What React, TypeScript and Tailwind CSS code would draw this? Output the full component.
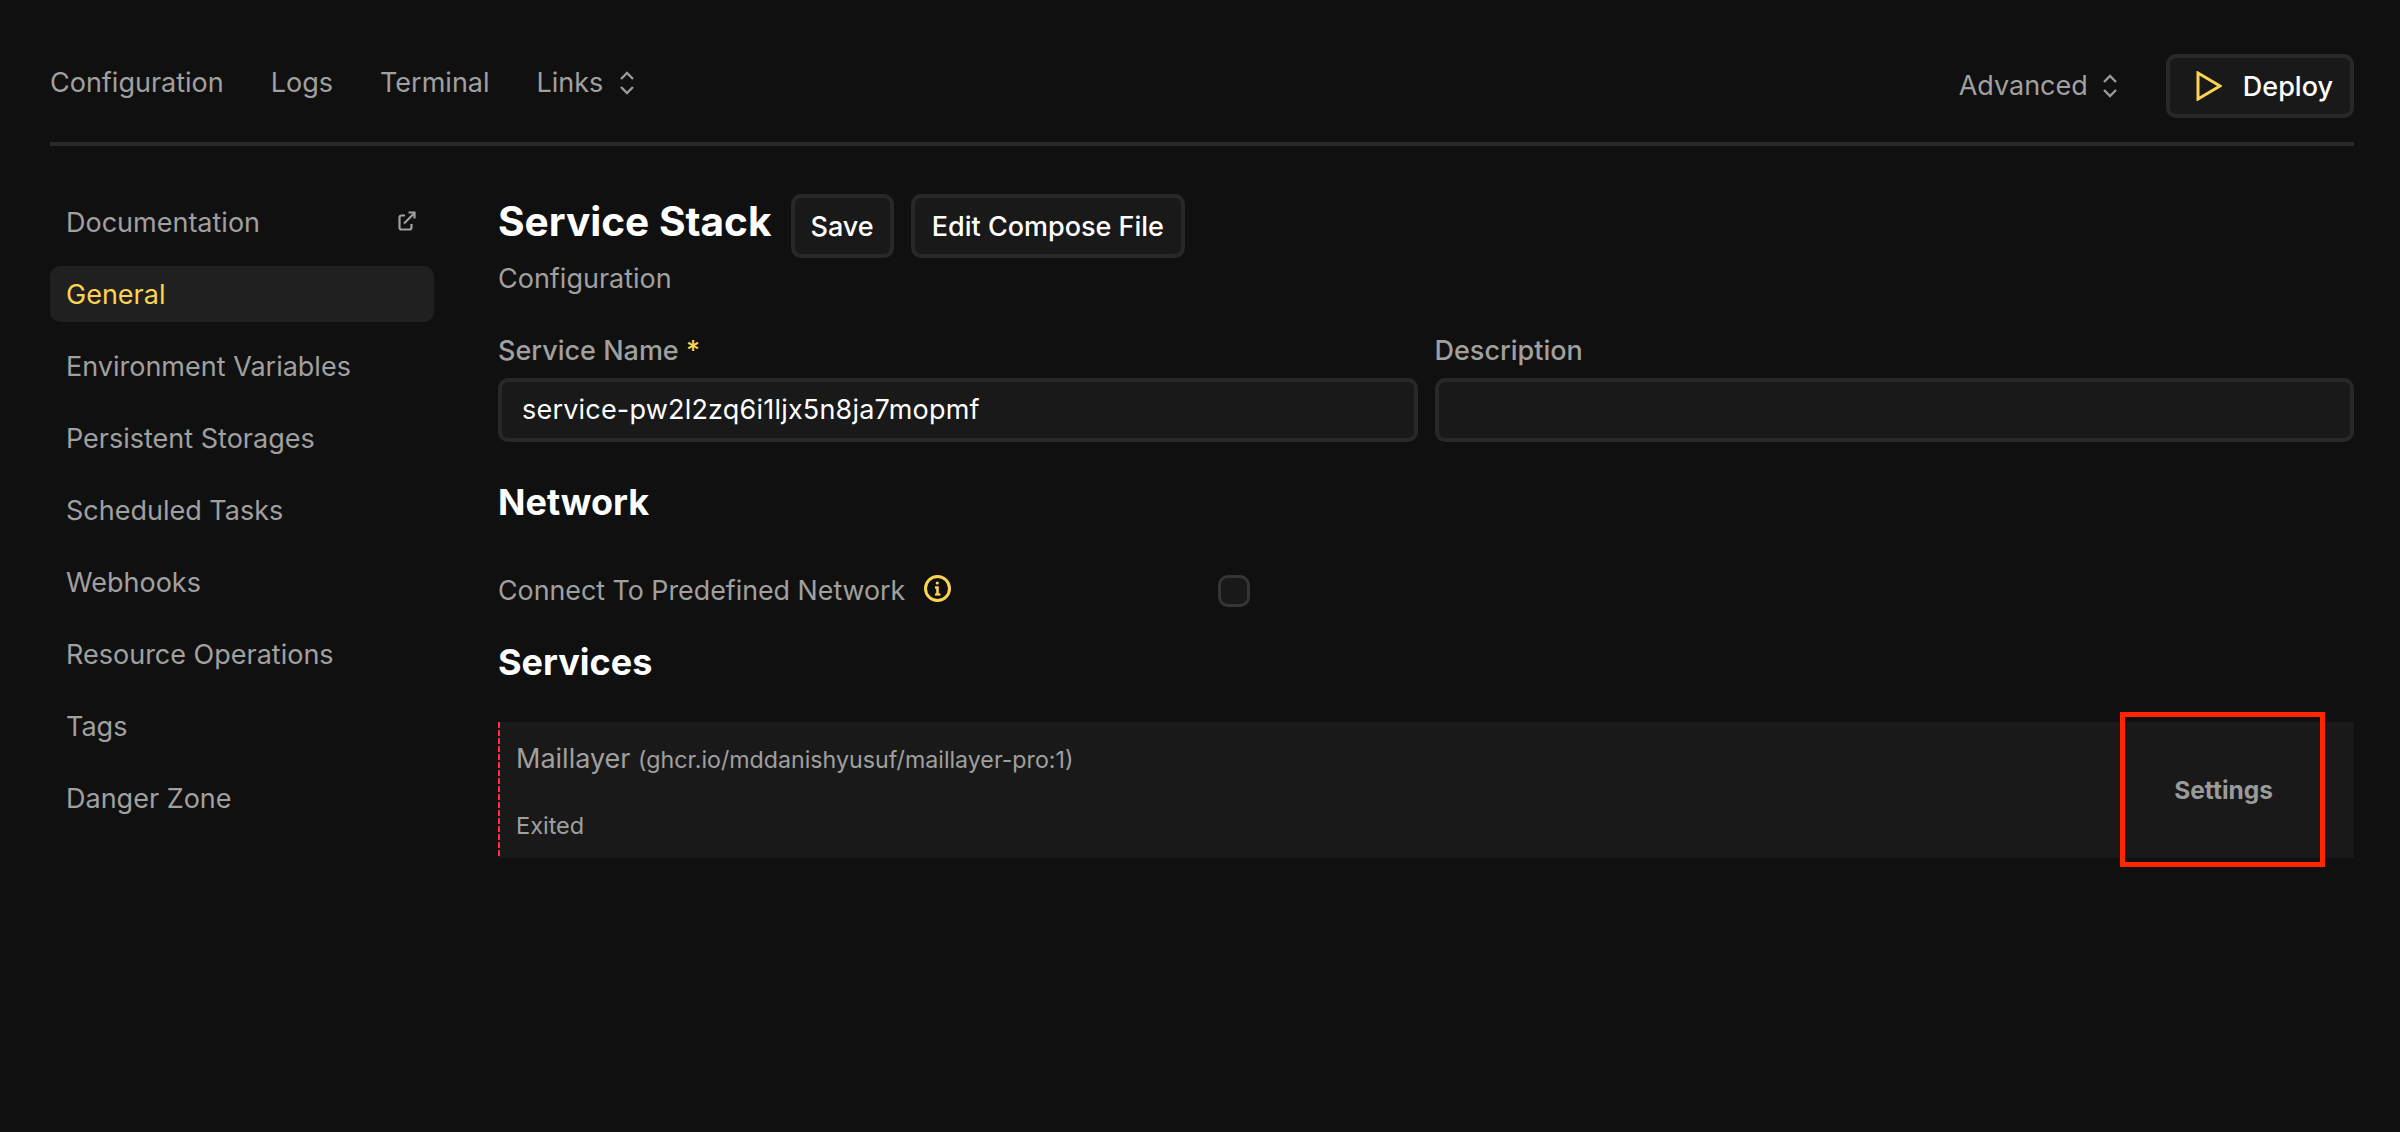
const menu = [
  "Documentation",
  "General",
  "Environment Variables",
  "Persistent Storages",
  "Scheduled Tasks",
  "Webhooks",
  "Resource Operations",
  "Tags",
  "Danger Zone",
]

function Updown() {
  return (
    <svg width="16" height="24" viewBox="0 0 16 24" fill="none" stroke="#9a9a9a" strokeWidth="2.4">
      <path d="M2 8 L8 2 L14 8" />
      <path d="M2 16 L8 22 L14 16" />
    </svg>
  )
}

function Btn({ children, className }: { children: React.ReactNode; className?: string }) {
  return (
    <button
      className={
        "flex h-[64px] items-center rounded-[10px] border-4 border-[#282828] bg-[#191919] pt-[2px] text-[27px] font-medium text-white " +
        (className ?? "px-[17px]")
      }
    >
      {children}
    </button>
  )
}

export default function App() {
  return (
    <div className="h-[1132px] overflow-hidden bg-[#101010] pr-[46px] pl-[50px] font-['Inter',sans-serif] text-[27px] text-[#a0a0a0]">
      {/* top nav */}
      <div className="box-content flex h-[88px] items-start justify-between border-b-4 border-[#282828] pt-[54px]">
        <div className="flex h-[56px] items-start gap-[47px] pt-[11px]">
          <span className="leading-[36px]">Configuration</span>
          <span className="leading-[36px]">Logs</span>
          <span className="leading-[36px]">Terminal</span>
          <span className="flex items-center gap-[16px] leading-[36px]">
            Links <Updown />
          </span>
        </div>
        <div className="flex items-center gap-[48px]">
          <span className="flex items-center gap-[14px]">
            Advanced <Updown />
          </span>
          <Btn className="gap-[21px] pr-[17px] pl-[26px]">
            <svg width="26" height="30" viewBox="0 0 26 30" fill="none" stroke="#fcd452" strokeWidth="3" className="-translate-y-[1px]">
              <path d="M2 2 L24 15 L2 28 Z" />
            </svg>
            Deploy
          </Btn>
        </div>
      </div>

      <div className="flex pt-[48px]">
        {/* sidebar */}
        <div className="flex w-[384px] shrink-0 flex-col gap-[16px]">
          {menu.map((m) => (
            <div
              key={m}
              className={
                m === "General"
                  ? "flex h-[56px] items-center rounded-[10px] bg-[#202020] px-[16px] pt-[2px] text-[#fcd452]"
                  : "flex h-[56px] items-center justify-between px-[16px] pt-[2px]"
              }
            >
              {m}
              {m === "Documentation" && (
                <svg width="18" height="20" viewBox="0 0 18 20" fill="none" stroke="#a0a0a0" strokeWidth="2.2" className="mr-[2px] -translate-y-[2px]">
                  <path d="M7 4.5 H3.5 a2 2 0 0 0 -2 2 V16.5 a2 2 0 0 0 2 2 H11.5 a2 2 0 0 0 2 -2 V13" />
                  <path d="M6 12.5 L16.5 2" />
                  <path d="M10.5 1.5 H16.5 V7.5" />
                </svg>
              )}
            </div>
          ))}
        </div>

        {/* main */}
        <div className="ml-[64px] flex-1">
          <div className="flex items-center">
            <h1 className="mr-[19px] -translate-y-[4px] text-[40.6px] font-bold text-white">Service Stack</h1>
            <Btn className="mr-[17px] px-[16px]">Save</Btn>
            <Btn>Edit Compose File</Btn>
          </div>
          <div className="mt-[3px] leading-[36px]">Configuration</div>

          <div className="mt-[36px] flex gap-[17px]">
            <div className="flex-1">
              <label className="block leading-[36px] font-medium">
                Service Name <span className="text-[#fcd452]">*</span>
              </label>
              <div className="mt-[9px] flex h-[64px] items-center rounded-[10px] border-4 border-[#282828] bg-[#191919] px-[20px] tracking-[0.2px] text-white">
                service-pw2l2zq6i1ljx5n8ja7mopmf
              </div>
            </div>
            <div className="flex-1">
              <label className="block leading-[36px] font-medium">Description</label>
              <div className="mt-[9px] h-[64px] rounded-[10px] border-4 border-[#282828] bg-[#191919]" />
            </div>
          </div>

          <h2 className="mt-[40px] text-[36px] leading-[40px] font-bold text-white">Network</h2>

          <div className="mt-[50px] flex items-center">
            <span className="w-[720px] leading-[36px]">
              <span className="inline-flex items-center gap-[19px] text-[26.8px]">
                Connect To Predefined Network
                <svg width="27" height="27" viewBox="0 0 27 27" fill="none" stroke="#fcd452" strokeWidth="3" className="-translate-y-[2px]">
                  <circle cx="13.5" cy="13.5" r="12" />
                  <path d="M11 12.5 H13.5 V19" strokeWidth="2.6" />
                  <path d="M11 19.5 H16.5" strokeWidth="2.2" />
                  <circle cx="13.3" cy="8" r="1.6" fill="#fcd452" stroke="none" />
                </svg>
              </span>
            </span>
            <div className="h-[32px] w-[32px] rounded-[10px] border-[3px] border-[#353535] bg-[#191919]" />
          </div>

          <h2 className="mt-[33px] text-[36px] leading-[40px] font-bold text-white">Services</h2>

          <div className="relative mt-[40px] flex h-[136px] bg-[#191919]">
            <div className="w-[2px] shrink-0 bg-[repeating-linear-gradient(to_bottom,#ff2d46_0,#ff2d46_6px,transparent_6px,transparent_8px)]" />
            <div className="flex-1 pl-[16px]">
              <div className="mt-[19px] leading-[36px]">
                Maillayer <span className="text-[23.2px]">(ghcr.io/mddanishyusuf/maillayer-pro:1)</span>
              </div>
              <div className="mt-[33px] text-[23.5px] leading-[30px]">Exited</div>
            </div>
            <div className="absolute top-0 right-[81px] flex h-full items-center text-[24.5px] font-bold text-[#9a9a9a]">Settings</div>
            <div className="absolute -top-[10px] right-[29px] h-[155px] w-[205px] border-[5px] border-[#ff2600]" />
          </div>
        </div>
      </div>
    </div>
  )
}
